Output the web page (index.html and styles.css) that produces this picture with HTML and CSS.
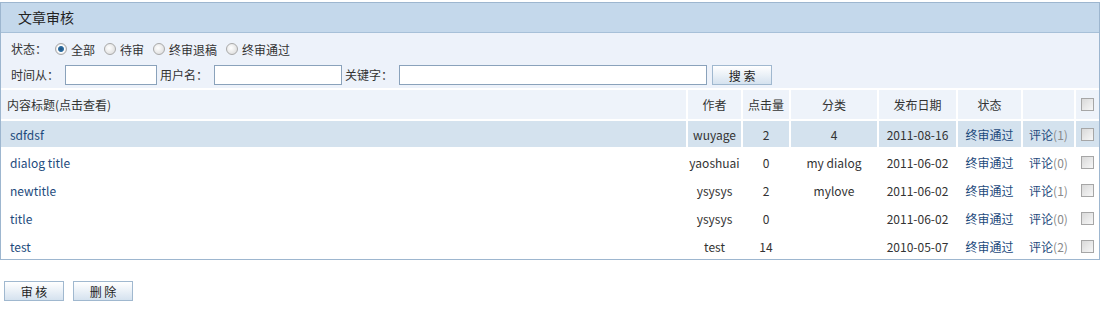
FILE: index.html
```html
<!DOCTYPE html>
<html lang="zh-CN">
<head>
    <meta charset="UTF-8">
    <title>文章审核</title>
    <link rel="stylesheet" href="styles.css">
</head>
<body>
    <div class="panel">
        <div class="panel-title">文章审核</div>
        <div class="filter">
            <div class="filter-row">
                <span class="label">状态：</span>
                <label class="opt first"><input type="radio" name="state" checked>全部</label>
                <label class="opt"><input type="radio" name="state">待审</label>
                <label class="opt"><input type="radio" name="state">终审退稿</label>
                <label class="opt"><input type="radio" name="state">终审通过</label>
            </div>
            <div class="filter-row">
                <span class="label">时间从：</span>
                <input type="text" class="field w-time">
                <span class="label">用户名：</span>
                <input type="text" class="field w-user">
                <span class="label">关键字：</span>
                <input type="text" class="field w-key">
                <button class="btn btn-search">搜 索</button>
            </div>
        </div>
        <table class="grid">
            <colgroup>
                <col style="width:686px">
                <col style="width:55px">
                <col style="width:48px">
                <col style="width:88px">
                <col style="width:79px">
                <col style="width:65px">
                <col style="width:53px">
                <col style="width:24px">
            </colgroup>
            <thead>
                <tr>
                    <th class="col-title">内容标题(点击查看)</th>
                    <th>作者</th>
                    <th>点击量</th>
                    <th>分类</th>
                    <th>发布日期</th>
                    <th>状态</th>
                    <th></th>
                    <th><input type="checkbox" class="chk"></th>
                </tr>
            </thead>
            <tbody>
                <tr class="active">
                    <td class="col-title"><a href="#">sdfdsf</a></td>
                    <td>wuyage</td>
                    <td>2</td>
                    <td>4</td>
                    <td>2011-08-16</td>
                    <td><a href="#">终审通过</a></td>
                    <td><a href="#">评论</a><span class="count">(1)</span></td>
                    <td><input type="checkbox" class="chk"></td>
                </tr>
                <tr>
                    <td class="col-title"><a href="#">dialog title</a></td>
                    <td>yaoshuai</td>
                    <td>0</td>
                    <td>my dialog</td>
                    <td>2011-06-02</td>
                    <td><a href="#">终审通过</a></td>
                    <td><a href="#">评论</a><span class="count">(0)</span></td>
                    <td><input type="checkbox" class="chk"></td>
                </tr>
                <tr>
                    <td class="col-title"><a href="#">newtitle</a></td>
                    <td>ysysys</td>
                    <td>2</td>
                    <td>mylove</td>
                    <td>2011-06-02</td>
                    <td><a href="#">终审通过</a></td>
                    <td><a href="#">评论</a><span class="count">(1)</span></td>
                    <td><input type="checkbox" class="chk"></td>
                </tr>
                <tr>
                    <td class="col-title"><a href="#">title</a></td>
                    <td>ysysys</td>
                    <td>0</td>
                    <td></td>
                    <td>2011-06-02</td>
                    <td><a href="#">终审通过</a></td>
                    <td><a href="#">评论</a><span class="count">(0)</span></td>
                    <td><input type="checkbox" class="chk"></td>
                </tr>
                <tr>
                    <td class="col-title"><a href="#">test</a></td>
                    <td>test</td>
                    <td>14</td>
                    <td></td>
                    <td>2010-05-07</td>
                    <td><a href="#">终审通过</a></td>
                    <td><a href="#">评论</a><span class="count">(2)</span></td>
                    <td><input type="checkbox" class="chk"></td>
                </tr>
            </tbody>
        </table>
    </div>
    <div class="actions">
        <button class="btn">审 核</button>
        <button class="btn">删 除</button>
    </div>
</body>
</html>
```

FILE: styles.css
```css
body {
    margin: 0;
    padding: 0;
    font-family: "Noto Sans CJK SC", sans-serif;
    font-size: 12px;
    color: #333;
    background-color: #fff;
}
a {
    color: #1d4a7c;
    text-decoration: none;
}
.panel {
    margin-top: 2px;
    width: 1098px;
    border: 1px solid #9db6cf;
}
.panel-title {
    height: 29px;
    line-height: 29px;
    padding-left: 17px;
    font-size: 14px;
    color: #222;
    background-color: #c4d8eb;
    border-bottom: 1px solid #a7c0d8;
}
.filter {
    padding: 3px 0 0 10px;
    height: 52px;
    background-color: #edf2fa;
}
.filter-row {
    display: flex;
    align-items: center;
    height: 26px;
}
.label {
    line-height: 16px;
}
.opt {
    display: flex;
    align-items: center;
    margin-left: 9px;
}
.opt.first {
    margin-left: 8px;
}
input[type="radio"] {
    appearance: none;
    width: 12px;
    height: 12px;
    margin: 0 4px 0 0;
    border: 1px solid #a9a9a9;
    border-radius: 50%;
    background: radial-gradient(circle at 40% 40%, #ffffff, #d6d6d6);
}
input[type="radio"]:checked {
    background: radial-gradient(circle, #1e4f7c 0, #2f6fa3 2.5px, #ffffff 3.5px, #d6d6d6 6px);
}
.field {
    box-sizing: border-box;
    height: 20px;
    margin: 0 3px 0 6px;
    border: 1px solid #8aa2bb;
    background-color: #fff;
}
.w-time {
    width: 92px;
}
.w-user {
    width: 128px;
}
.w-key {
    width: 308px;
}
.btn {
    box-sizing: border-box;
    width: 60px;
    height: 20px;
    padding: 0;
    font-family: "Noto Sans CJK SC", sans-serif;
    font-size: 12px;
    color: #222;
    border: 1px solid #a0b8cf;
    background: linear-gradient(#ffffff, #d5e2ef);
}
.btn-search {
    margin-left: 2px;
}
.grid {
    width: 1098px;
    table-layout: fixed;
    border-collapse: collapse;
    border-spacing: 0;
}
.grid th,
.grid td {
    padding: 0;
    text-align: center;
    font-weight: normal;
    border-top: 2px solid #fff;
    border-left: 2px solid #fff;
    white-space: nowrap;
}
.grid th {
    height: 29px;
    background-color: #eef3fa;
}
.grid td {
    height: 26px;
}
.grid th:first-child,
.grid td:first-child {
    border-left: none;
}
.grid th.col-title {
    text-align: left;
    padding-left: 6px;
}
.grid td.col-title {
    text-align: left;
    padding-left: 9px;
}
.grid tr.active td {
    background-color: #d4e2ee;
}
.count {
    color: #8a8a8a;
}
.chk {
    appearance: none;
    display: block;
    width: 13px;
    height: 13px;
    margin: 0 auto;
    border: 1px solid #a6a6a6;
    background: linear-gradient(135deg, #d9d9d9, #f7f7f7);
}
.actions {
    display: flex;
    gap: 9px;
    padding: 21px 0 0 4px;
}
```
